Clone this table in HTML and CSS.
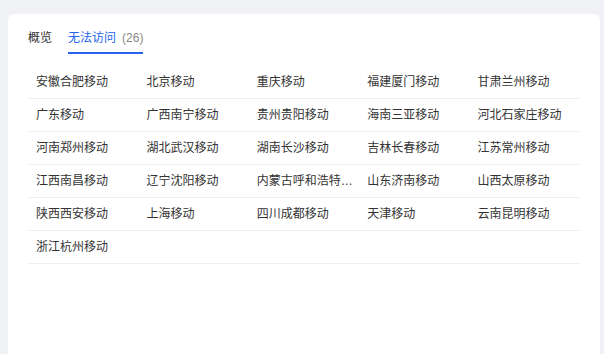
FILE: index.html
```html
<!DOCTYPE html>
<html lang="zh-CN">
<head>
  <meta charset="UTF-8" />
  <meta name="viewport" content="width=device-width, initial-scale=1.0"/>
  <title>无法访问</title>
  <link rel="stylesheet" href="styles.css">
</head>
<body>

  <div class="panel">
    <div class="tabs">
      <span class="tab">概览</span>
      <span class="tab active">无法访问<span class="count">(26)</span></span>
    </div>

    <div class="isp-grid">
      <div class="cell">安徽合肥移动</div>
      <div class="cell">北京移动</div>
      <div class="cell">重庆移动</div>
      <div class="cell">福建厦门移动</div>
      <div class="cell">甘肃兰州移动</div>

      <div class="cell">广东移动</div>
      <div class="cell">广西南宁移动</div>
      <div class="cell">贵州贵阳移动</div>
      <div class="cell">海南三亚移动</div>
      <div class="cell">河北石家庄移动</div>

      <div class="cell">河南郑州移动</div>
      <div class="cell">湖北武汉移动</div>
      <div class="cell">湖南长沙移动</div>
      <div class="cell">吉林长春移动</div>
      <div class="cell">江苏常州移动</div>

      <div class="cell">江西南昌移动</div>
      <div class="cell">辽宁沈阳移动</div>
      <div class="cell" title="内蒙古呼和浩特移动">内蒙古呼和浩特移动</div>
      <div class="cell">山东济南移动</div>
      <div class="cell">山西太原移动</div>

      <div class="cell">陕西西安移动</div>
      <div class="cell">上海移动</div>
      <div class="cell">四川成都移动</div>
      <div class="cell">天津移动</div>
      <div class="cell">云南昆明移动</div>

      <div class="cell">浙江杭州移动</div>
      <div class="cell"></div>
      <div class="cell"></div>
      <div class="cell"></div>
      <div class="cell"></div>
    </div>
  </div>

</body>
</html>
```

FILE: styles.css
```css
body {
  margin: 0;
  background: #f0f1f5;
  font-family: "Liberation Sans", "Noto Sans CJK SC", sans-serif;
  font-size: 12px;
  color: #333;
}
.panel {
  margin: 14px 4px 0 8px;
  min-height: 360px;
  background: #fff;
  border-radius: 6px;
  padding: 0 20px;
}
.tabs {
  display: flex;
  gap: 16px;
  padding-top: 16px;
}
.tab {
  line-height: 16px;
  padding-bottom: 6px;
  border-bottom: 2px solid transparent;
  color: #333;
}
.tab.active {
  color: #2463eb;
  border-bottom-color: #2463eb;
}
.count {
  margin-left: 6px;
  color: #888;
}
.isp-grid {
  display: grid;
  grid-template-columns: repeat(5, 1fr);
  margin-top: 12px;
}
.cell {
  height: 32px;
  line-height: 32px;
  padding: 0 2px 0 8px;
  border-bottom: 1px solid #eeeff2;
  white-space: nowrap;
  overflow: hidden;
  text-overflow: ellipsis;
}
```
